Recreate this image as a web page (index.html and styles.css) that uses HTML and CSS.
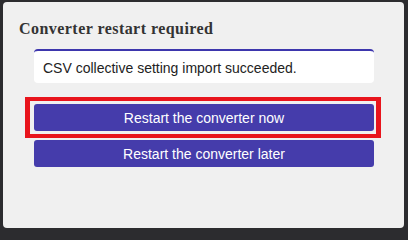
FILE: index.html
```html
<!DOCTYPE html>
<html>
<head>
<meta charset="utf-8">
<link rel="stylesheet" href="styles.css">
</head>
<body>
<div class="dialog">
  <h2 class="title">Converter restart required</h2>
  <div class="content">
    <div class="message">CSV collective setting import succeeded.</div>
    <div class="actions">
      <div class="highlight">
        <button class="btn">Restart the converter now</button>
      </div>
      <button class="btn">Restart the converter later</button>
    </div>
  </div>
</div>
</body>
</html>
```
FILE: styles.css
```css
html, body {
  margin: 0;
  padding: 0;
}
body {
  width: 408px;
  height: 232px;
  background: #2c2c2f;
  overflow: hidden;
  padding-top: 2px;
  box-sizing: border-box;
}
.dialog {
  margin-left: 3px;
  width: 401px;
  height: 226px;
  background: #f0f0f0;
  border-radius: 4px;
  box-sizing: border-box;
  padding-top: 17px;
}
.title {
  margin: 0;
  padding-left: 16px;
  font-family: "Liberation Serif", "Times New Roman", serif;
  font-weight: bold;
  font-size: 16px;
  letter-spacing: 0.45px;
  line-height: 20px;
  color: #333;
}
.content {
  padding: 10px 30px 0 31px;
}
.message {
  background: #fff;
  border-top: 2px solid #3d36ad;
  border-radius: 4px;
  padding: 9px 9px 7px;
  font-family: "Liberation Sans", Arial, sans-serif;
  font-size: 14px;
  line-height: 16px;
  color: #222;
}
.actions {
  margin-top: 21px;
  display: flex;
  flex-direction: column;
  gap: 9px;
}
.highlight {
  position: relative;
  display: flex;
}
.highlight::after {
  content: "";
  position: absolute;
  left: -9px;
  right: -7px;
  top: -7px;
  bottom: -7px;
  border: 4px solid #e8141c;
  border-left-width: 5px;
  border-right-width: 5px;
  pointer-events: none;
}
.btn {
  width: 100%;
  height: 27px;
  border: none;
  border-radius: 3px;
  background: #453cab;
  color: #fff;
  font-family: "Liberation Sans", Arial, sans-serif;
  font-size: 14px;
  padding: 0;
}
```
